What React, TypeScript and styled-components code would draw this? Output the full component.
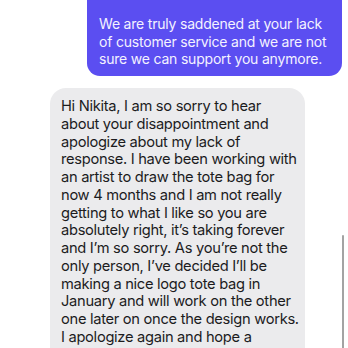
import React from 'react';
import styled, { createGlobalStyle } from 'styled-components';

const GlobalStyle = createGlobalStyle`
  html, body {
    margin: 0;
    padding: 0;
    background: #ffffff;
    overflow: hidden;
  }
`;

const Thread = styled.div`
  width: 348px;
  height: 348px;
  position: relative;
  overflow: hidden;
  display: flex;
  flex-direction: column;
  gap: 12px;
  background: #ffffff;
`;

const Bubble = styled.div<{ $mine?: boolean }>`
  width: 255px;
  box-sizing: border-box;
  align-self: ${({ $mine }) => ($mine ? 'flex-end' : 'flex-start')};
  margin: ${({ $mine }) => ($mine ? '-30px 6px 0 0' : '0 0 0 50px')};
  padding: ${({ $mine }) => ($mine ? '45px 8px 8px 12px' : '10px 8px 30px 11px')};
  border-radius: ${({ $mine }) => ($mine ? '13px' : '16px')};
  background: ${({ $mine }) => ($mine ? '#5b4ef1' : '#ebebed')};
  color: ${({ $mine }) => ($mine ? '#f4f2ff' : '#1c1c1e')};
  font-family: Inter, 'Noto Sans', sans-serif;
  font-size: ${({ $mine }) => ($mine ? '14px' : '14.7px')};
  line-height: ${({ $mine }) => ($mine ? '17.7px' : '17.75px')};
  letter-spacing: ${({ $mine }) => ($mine ? '-0.2px' : '-0.3px')};
  white-space: pre;
`;

const ScrollThumb = styled.div`
  position: absolute;
  right: 4px;
  top: 235px;
  width: 2.5px;
  height: 140px;
  border-radius: 2px;
  background: #a3a3a3;
`;

const sent = `We are truly saddened at your lack
of customer service and we are not
sure we can support you anymore.`;

const reply = `Hi Nikita, I am so sorry to hear
about your disappointment and
apologize about my lack of
response. I have been working with
an artist to draw the tote bag for
now 4 months and I am not really
getting to what I like so you are
absolutely right, it’s taking forever
and I’m so sorry. As you’re not the
only person, I’ve decided I’ll be
making a nice logo tote bag in
January and will work on the other
one later on once the design works.
I apologize again and hope a`;

export default function App() {
  return (
    <>
      <GlobalStyle />
      <Thread>
        <Bubble $mine>{sent}</Bubble>
        <Bubble>{reply}</Bubble>
        <ScrollThumb />
      </Thread>
    </>
  );
}
